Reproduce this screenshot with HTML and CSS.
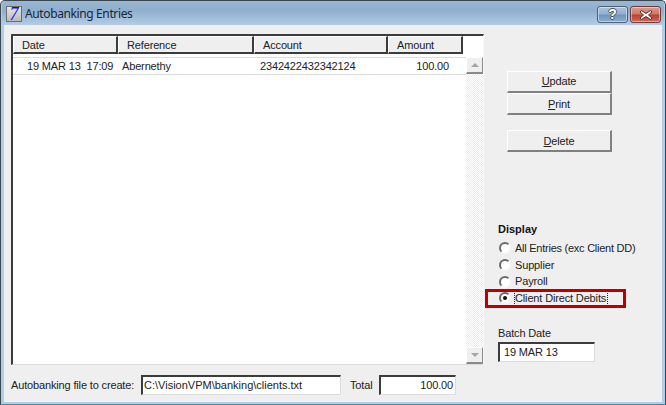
FILE: index.html
```html
<!DOCTYPE html>
<html>
<head>
<meta charset="utf-8">
<title>Autobanking Entries</title>
<link rel="stylesheet" href="styles.css">
</head>
<body>
<div class="window">
  <header class="titlebar">
    <span class="app-icon">7</span>
    <span class="title">Autobanking Entries</span>
    <span class="caption-btn help">?</span>
    <span class="caption-btn close">
      <svg width="16" height="12" viewBox="0 0 16 12"><path d="M3.5 1.5 L8 4.5 L12.5 1.5 L14 3 L10.5 6 L14 9 L12.5 10.5 L8 7.5 L3.5 10.5 L2 9 L5.5 6 L2 3 Z" fill="#fff" stroke="#5a2a2a" stroke-width="1"/></svg>
    </span>
  </header>
  <main class="client">
    <section class="left">
      <div class="list">
        <div class="list-head">
          <div class="hcell h-date">Date</div>
          <div class="hcell h-ref">Reference</div>
          <div class="hcell h-acc">Account</div>
          <div class="hcell h-amt">Amount</div>
        </div>
        <div class="list-body">
          <div class="rows">
            <div class="row">
              <span class="c-date">19 MAR 13&nbsp; 17:09</span>
              <span class="c-ref">Abernethy</span>
              <span class="c-acc">2342422432342124</span>
              <span class="c-amt">100.00</span>
            </div>
          </div>
          <div class="scrollbar">
            <div class="sb-btn"><span class="arrow up"></span></div>
            <div class="sb-track"></div>
            <div class="sb-btn"><span class="arrow down"></span></div>
          </div>
        </div>
      </div>
      <div class="footer">
        <label class="foot-label">Autobanking file to create:</label>
        <div class="field f-path">C:\VisionVPM\banking\clients.txt</div>
        <label class="total-label">Total</label>
        <div class="field f-total">100.00</div>
      </div>
    </section>
    <aside class="right">
      <div class="actions">
        <button class="btn"><u>U</u>pdate</button>
        <button class="btn"><u>P</u>rint</button>
        <button class="btn btn-gap"><u>D</u>elete</button>
      </div>
      <h2 class="display-h">Display</h2>
      <div class="radios">
        <div class="radio-row"><span class="radio"></span><span class="tight">All Entries (exc Client DD)</span></div>
        <div class="radio-row"><span class="radio"></span><span>Supplier</span></div>
        <div class="radio-row"><span class="radio"></span><span>Payroll</span></div>
        <div class="radio-row selected"><span class="radio on"></span><span class="focus">Client Direct Debits</span><span class="highlight"></span></div>
      </div>
      <div class="batch-label">Batch Date</div>
      <div class="field f-batch">19 MAR 13</div>
    </aside>
  </main>
</div>
</body>
</html>
```

FILE: styles.css
```css
* { box-sizing: border-box; }
html, body { margin: 0; padding: 0; background: #fff; }
body { width: 666px; height: 405px; overflow: hidden; font: 11px/13px "Liberation Sans", Arial, sans-serif; letter-spacing: -0.15px; color: #111; }

.window {
  width: 666px; height: 405px; display: flex; flex-direction: column;
  background: #b4cde6; border: 1px solid #39454f; border-bottom: 1px solid #3b8db0;
  border-radius: 5px 5px 0 0;
  padding: 0 3px 2px 3px;
}

.titlebar {
  height: 24px; margin: 0 -2px; padding: 5px 3px 0 4px; display: flex; align-items: flex-start;
  background: linear-gradient(#9ab6d2 0, #8fafce 40%, #b4cce4 100%);
  border-radius: 4px 4px 0 0;
}
.app-icon {
  width: 16px; height: 16px; background: linear-gradient(#e8e8e8, #b9b9b9); border: 1px solid #6d6d6d;
  font: italic 18px/15px "Liberation Serif", serif; color: #0a0ae6; text-align: center; letter-spacing: 0;
}
.title { margin-left: 3px; font: 12px/16px "Noto Sans", sans-serif; letter-spacing: -0.38px; color: #1c2630; flex: 1; }
.caption-btn {
  width: 31px; height: 17px; border: 1px solid #4f6172; border-radius: 3px;
  display: flex; align-items: center; justify-content: center; margin-left: 2px;
  box-shadow: inset 0 0 0 1px rgba(255,255,255,.45);
}
.help {
  background: linear-gradient(#a9c3dd 0, #8fb0d0 48%, #6f95bb 52%, #88aed2 100%);
  font: bold 14px/15px "Liberation Sans", sans-serif; color: #fff;
  text-shadow: 1px 0 #4a5560, -1px 0 #4a5560, 0 1px #4a5560, 0 -1px #4a5560;
}
.close {
  background: linear-gradient(#dc9a8c 0, #cf7766 48%, #b93f30 52%, #cf6a58 100%);
  border-color: #6b3c3a;
}

.client {
  flex: 1; min-height: 0; display: flex; background: #efefef;
}

.left { width: 480px; padding: 9px 0 0 7px; }

.list {
  width: 473px; height: 331px; background: #fff;
  border-left: 2px solid #3c3c3c; border-top: 2px solid #3c3c3c;
  border-right: 1px solid #f8f8f8; border-bottom: 1px solid #dcdcdc;
  display: flex; flex-direction: column;
}
.list-head { display: flex; height: 18px; flex: none; }
.hcell {
  background: #efefef; border-top: 1px solid #fff; border-left: 1px solid #fff;
  border-right: 2px solid #3c3c3c; border-bottom: 2px solid #3c3c3c;
  padding: 2px 0 0 8px; line-height: 13px; height: 18px; color: #222;
}
.h-date { width: 105px; }
.h-ref { width: 136px; padding-left: 8px; }
.h-acc { width: 134px; padding-left: 8px; }
.h-amt { width: 75px; padding-left: 8px; }

.list-body { flex: 1; display: flex; min-height: 0; padding-top: 3px; }
.rows { flex: 1; min-width: 0; }
.row {
  height: 18px; border-top: 1px solid #dcdcdc; border-bottom: 1px solid #dcdcdc;
  display: flex; align-items: center; color: #222;
}
.c-date { width: 109px; padding-left: 14px; white-space: nowrap; }
.c-ref { width: 138px; }
.c-acc { width: 135px; }
.c-amt { width: 54px; text-align: right; }

.scrollbar { width: 17px; display: flex; flex-direction: column; }
.sb-btn {
  height: 17px; flex: none; background: #efefef;
  border-top: 1px solid #fff; border-left: 1px solid #fff;
  border-right: 1px solid #8a8a8a; border-bottom: 2px solid #8a8a8a;
  display: flex; align-items: center; justify-content: center;
}
.sb-track {
  flex: 1;
  background-color: #fff;
  background-image: repeating-conic-gradient(#ececec 0 25%, #fff 0 50%);
  background-size: 2px 2px;
}
.arrow { width: 0; height: 0; border-left: 4px solid transparent; border-right: 4px solid transparent; }
.arrow.up { border-bottom: 4px solid #a6a6a6; }
.arrow.down { border-top: 4px solid #a6a6a6; }

.footer { display: flex; align-items: center; height: 20px; margin-top: 10px; }
.foot-label { width: 130px; white-space: nowrap; color: #222; }
.field {
  height: 20px; background: #fff; padding: 2px 0 0 1px; color: #222;
  border-top: 2px solid #3c3c3c; border-left: 2px solid #3c3c3c;
  border-right: 1px solid #dcdcdc; border-bottom: 1px solid #dcdcdc;
  white-space: nowrap;
}
.f-path { width: 200px; letter-spacing: 0; }
.total-label { margin-left: 9px; width: 29px; color: #222; }
.f-total { width: 77px; text-align: right; padding-right: 2px; }

.right { flex: 1; padding: 46px 0 0 14px; }
.actions { display: flex; flex-direction: column; align-items: flex-start; padding-left: 9px; }
.btn {
  width: 105px; height: 22px; padding: 0;
  background: #efefef; color: #222;
  border-top: 1px solid #fff; border-left: 1px solid #fff;
  border-right: 2px solid #808080; border-bottom: 2px solid #808080;
  font: 11px/13px "Liberation Sans", Arial, sans-serif; letter-spacing: -0.15px;
}
.btn + .btn { padding-top: 2px; }
.btn-gap { margin-top: 15px; }

.display-h { margin: 71px 0 0; font: bold 11px/13px "Liberation Sans", Arial, sans-serif; letter-spacing: 0; color: #111; }
.radios { margin-top: 4px; }
.radio-row { position: relative; display: flex; align-items: center; height: 16.7px; padding-left: 1px; color: #222; white-space: nowrap; }
.tight { letter-spacing: -0.25px; }
.radio {
  width: 12px; height: 12px; margin-right: 4px; border-radius: 50%; background: #fff; flex: none;
  border: 2px solid; border-color: #6a6a6a #f8f8f8 #f8f8f8 #6a6a6a;
  display: flex; align-items: center; justify-content: center;
}
.radio.on::after { content: ""; width: 4px; height: 4px; border-radius: 50%; background: #111; }
.focus { outline: 1px dotted #222; outline-offset: 0; padding: 0 1px 0 0; }
.highlight { position: absolute; left: -13px; top: -1px; width: 141px; height: 19px; border: 3px solid #bb0000; }

.batch-label { margin-top: 20px; color: #222; }
.f-batch { width: 97px; margin-top: 2px; padding-left: 4px; }
```
